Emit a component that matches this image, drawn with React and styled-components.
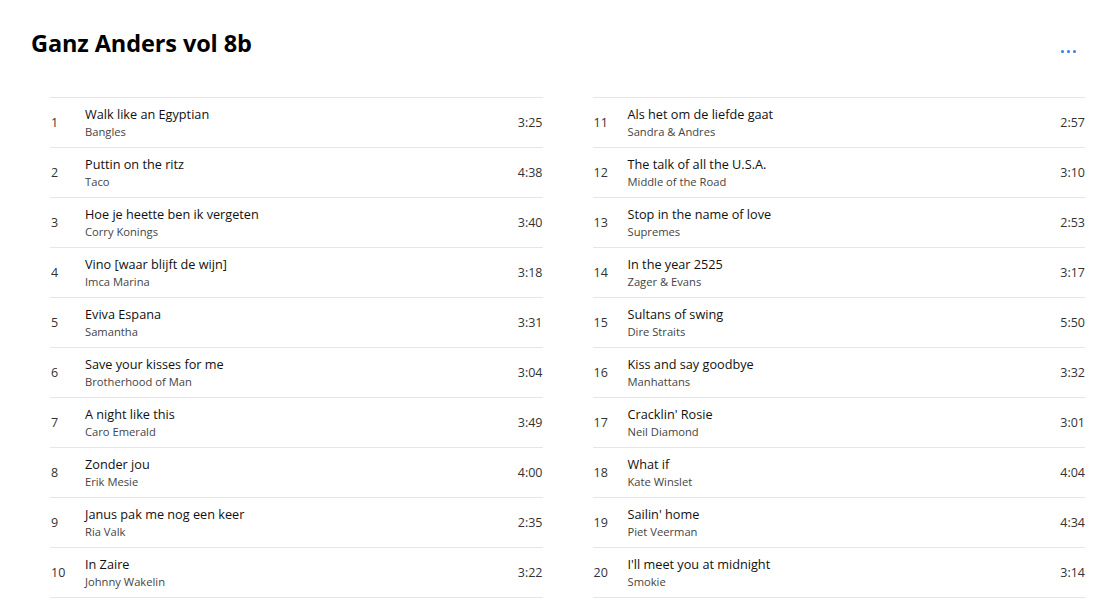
import React from "react";
import styled, { createGlobalStyle } from "styled-components";

const tracks = [
  ["Walk like an Egyptian", "Bangles", "3:25"],
  ["Puttin on the ritz", "Taco", "4:38"],
  ["Hoe je heette ben ik vergeten", "Corry Konings", "3:40"],
  ["Vino [waar blijft de wijn]", "Imca Marina", "3:18"],
  ["Eviva Espana", "Samantha", "3:31"],
  ["Save your kisses for me", "Brotherhood of Man", "3:04"],
  ["A night like this", "Caro Emerald", "3:49"],
  ["Zonder jou", "Erik Mesie", "4:00"],
  ["Janus pak me nog een keer", "Ria Valk", "2:35"],
  ["In Zaire", "Johnny Wakelin", "3:22"],
  ["Als het om de liefde gaat", "Sandra & Andres", "2:57"],
  ["The talk of all the U.S.A.", "Middle of the Road", "3:10"],
  ["Stop in the name of love", "Supremes", "2:53"],
  ["In the year 2525", "Zager & Evans", "3:17"],
  ["Sultans of swing", "Dire Straits", "5:50"],
  ["Kiss and say goodbye", "Manhattans", "3:32"],
  ["Cracklin' Rosie", "Neil Diamond", "3:01"],
  ["What if", "Kate Winslet", "4:04"],
  ["Sailin' home", "Piet Veerman", "4:34"],
  ["I'll meet you at midnight", "Smokie", "3:14"],
];

const GlobalStyle = createGlobalStyle`
  body {
    margin: 0;
    background: #fff;
    font-family: "Open Sans", "Noto Sans", sans-serif;
    color: #111;
  }
`;

const Page = styled.div`
  padding: 20px 35px 0 31px;
`;

const Header = styled.div`
  display: flex;
  justify-content: space-between;
  align-items: center;
  height: 46px;
`;

const Title = styled.h1`
  margin: 0;
  font-size: 23.5px;
  font-weight: 700;
  letter-spacing: -0.1px;
  color: #000;
`;

const MoreButton = styled.button`
  border: none;
  background: none;
  padding: 0;
  margin: 16px 9px 0 0;
  display: flex;
  gap: 3px;
  cursor: pointer;
`;

const Dot = styled.span`
  width: 3px;
  height: 3px;
  border-radius: 50%;
  background: #3a7be0;
`;

const Columns = styled.div`
  display: grid;
  grid-template-columns: 1fr 1fr;
  column-gap: 50px;
  margin: 31px 0 0 19px;
`;

const List = styled.ol`
  list-style: none;
  margin: 0;
  padding: 0;
  border-bottom: 1px solid #e6e6e6;
`;

const Row = styled.li`
  display: flex;
  align-items: center;
  height: 49px;
  border-top: 1px solid #e6e6e6;
`;

const Num = styled.span`
  width: 34px;
  padding-left: 1px;
  font-size: 12.5px;
  color: #333;
`;

const Info = styled.div`
  flex: 1;
  display: flex;
  flex-direction: column;
  margin-top: -1px;
`;

const Song = styled.span`
  font-size: 12.7px;
  line-height: 17px;
  color: #111;
  padding-top: 1px;
`;

const Artist = styled.span`
  font-size: 11.2px;
  line-height: 17px;
  color: #444;
`;

const Time = styled.span`
  font-size: 12.5px;
  color: #333;
`;

const Track = ({ n, song, artist, time }) => (
  <Row>
    <Num>{n}</Num>
    <Info>
      <Song>{song}</Song>
      <Artist>{artist}</Artist>
    </Info>
    <Time>{time}</Time>
  </Row>
);

export default function App() {
  const left = tracks.slice(0, 10);
  const right = tracks.slice(10);
  return (
    <>
      <GlobalStyle />
      <Page>
        <Header>
          <Title>Ganz Anders vol 8b</Title>
          <MoreButton aria-label="More">
            <Dot />
            <Dot />
            <Dot />
          </MoreButton>
        </Header>
        <Columns>
          <List>
            {left.map(([s, a, t], i) => (
              <Track key={i} n={i + 1} song={s} artist={a} time={t} />
            ))}
          </List>
          <List>
            {right.map(([s, a, t], i) => (
              <Track key={i} n={i + 11} song={s} artist={a} time={t} />
            ))}
          </List>
        </Columns>
      </Page>
    </>
  );
}
